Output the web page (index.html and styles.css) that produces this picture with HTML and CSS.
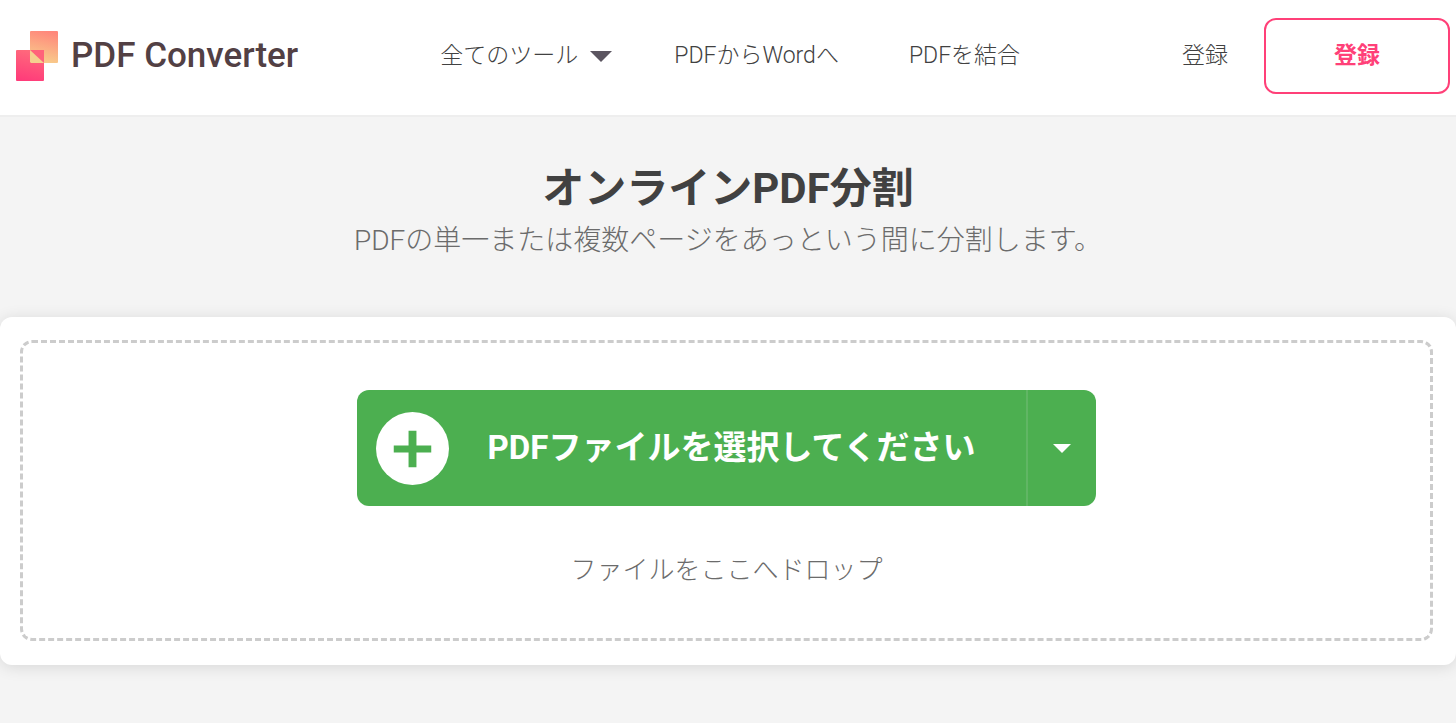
FILE: index.html
```html
<!DOCTYPE html>
<html lang="ja">
<head>
    <meta charset="UTF-8">
    <meta name="viewport" content="width=device-width, initial-scale=1.0">
    <title>PDF Converter</title>
    <link rel="stylesheet" href="styles.css">
</head>
<body>
    <header class="header">
        <a href="#" class="logo">
            <svg class="logo-icon" width="42" height="50" viewBox="0 0 42 50" aria-hidden="true">
                <defs>
                    <linearGradient id="logoTop" x1="0.6" y1="0" x2="0.4" y2="1">
                        <stop offset="0" stop-color="#ff877b"/>
                        <stop offset="1" stop-color="#f8cf8c"/>
                    </linearGradient>
                    <linearGradient id="logoBottom" x1="0.6" y1="0" x2="0.4" y2="1">
                        <stop offset="0" stop-color="#ff6b7c"/>
                        <stop offset="1" stop-color="#ff3c7a"/>
                    </linearGradient>
                </defs>
                <rect x="14" y="0" width="28" height="32" rx="1" fill="url(#logoTop)"/>
                <rect x="0" y="19" width="28" height="31" rx="1" fill="url(#logoBottom)"/>
                <path d="M14 19h14v13z" fill="#ff637a"/>
                <path d="M14 19l14 13h-13l-1-1z" fill="#f5d08f"/>
            </svg>
            <span class="logo-text">PDF Converter</span>
        </a>
        <nav class="nav">
            <a href="#" class="nav-link nav-tools">全てのツール
                <svg class="nav-caret" width="22" height="11" viewBox="0 0 22 11" aria-hidden="true"><path d="M0 0h22L11 11z" fill="#5b5560"/></svg>
            </a>
            <a href="#" class="nav-link">PDFからWordへ</a>
            <a href="#" class="nav-link">PDFを結合</a>
        </nav>
        <div class="account">
            <a href="#" class="nav-link">登録</a>
            <button type="button" class="signup">登録</button>
        </div>
    </header>

    <main>
        <div class="intro">
            <h1>オンラインPDF分割</h1>
            <p>PDFの単一または複数ページをあっという間に分割します。</p>
        </div>

        <section class="card">
            <div class="drop-zone">
                <div class="upload">
                    <button type="button" class="upload-main">
                        <svg class="upload-plus" width="73" height="73" viewBox="0 0 74 74" aria-hidden="true">
                            <circle cx="37" cy="37" r="37" fill="#fff"/>
                            <path d="M33 19h8v15h15v7H41v15h-8V41H18v-7h15z" fill="#4caf50"/>
                        </svg>
                        <span class="upload-label">PDFファイルを選択してください</span>
                    </button>
                    <button type="button" class="upload-more" aria-haspopup="true">
                        <svg width="18" height="9" viewBox="0 0 18 9" aria-hidden="true"><path d="M0 0h18L9 9z" fill="#fff"/></svg>
                    </button>
                </div>
                <p class="drop-hint">ファイルをここへドロップ</p>
            </div>
        </section>
    </main>
</body>
</html>
```

FILE: styles.css
```css
* {
    box-sizing: border-box;
}

body {
    margin: 0;
    background-color: #f4f4f4;
    color: #414141;
    font-family: Roboto, "Noto Sans CJK JP", sans-serif;
}

h1,
p {
    margin: 0;
}

a {
    color: inherit;
    text-decoration: none;
}

button {
    border: none;
    font-family: inherit;
    cursor: pointer;
}

svg {
    display: block;
    flex-shrink: 0;
}

.header {
    display: flex;
    align-items: center;
    padding: 18px 6px 21px 16px;
    background-color: #fff;
    border-bottom: 2px solid #eee;
    white-space: nowrap;
}

.logo {
    display: flex;
    align-items: center;
    gap: 13px;
}

.logo-text {
    color: #524044;
    font-size: 35px;
    font-weight: 500;
    line-height: 48px;
}

.nav {
    display: flex;
    align-items: center;
    gap: 70px;
    margin-left: 142px;
}

.nav-link {
    display: flex;
    align-items: center;
    gap: 12px;
    font-size: 23px;
    font-weight: 300;
    line-height: 36px;
}

.nav-tools {
    margin-right: -8px;
}

.account {
    display: flex;
    align-items: center;
    gap: 36px;
    margin-left: auto;
}

.signup {
    width: 186px;
    height: 76px;
    padding: 0;
    background-color: #fff;
    border: 2px solid #ff4078;
    border-radius: 12px;
    color: #ff4078;
    font-size: 23px;
    font-weight: 700;
    line-height: 36px;
}

.intro {
    padding: 40px 20px 56px;
    text-align: center;
}

.intro h1 {
    font-size: 42px;
    font-weight: 700;
    line-height: 64px;
}

.intro p {
    color: #6b6b6b;
    font-size: 28px;
    font-weight: 300;
    line-height: 40px;
}

main {
    padding-bottom: 40px;
}

.card {
    padding: 23px 23px 24px 20px;
    background-color: #fff;
    border-radius: 12px;
    box-shadow: 0 2px 16px rgba(0, 0, 0, 0.12);
}

.drop-zone {
    display: flex;
    flex-direction: column;
    align-items: center;
    gap: 44px;
    padding: 47px 20px 48px;
    border: 3px dashed #ccc;
    border-radius: 12px;
}

.upload {
    display: flex;
    height: 116px;
}

.upload-main {
    display: flex;
    align-items: center;
    gap: 39px;
    padding: 0 51px 0 19px;
    background-color: #4caf50;
    border-radius: 12px 0 0 12px;
    color: #fff;
}

.upload-label {
    font-size: 33px;
    font-weight: 700;
    line-height: 48px;
}

.upload-more {
    display: flex;
    align-items: center;
    justify-content: center;
    width: 70px;
    padding: 0;
    background-color: #4caf50;
    border-left: 2px solid #60b664;
    border-radius: 0 12px 12px 0;
}

.drop-hint {
    color: #6b6b6b;
    font-size: 26px;
    font-weight: 300;
    line-height: 40px;
}
```
